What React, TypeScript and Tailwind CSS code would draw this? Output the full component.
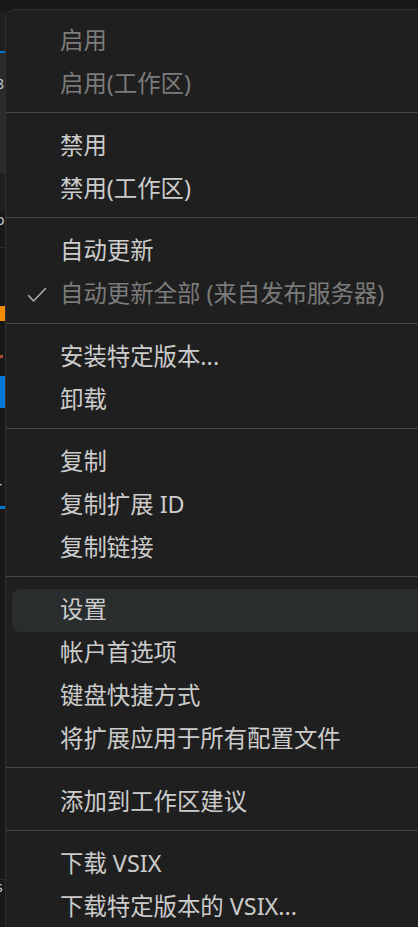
import React from 'react';

type Item = { label: string; disabled?: boolean; checked?: boolean; active?: boolean };

const GROUPS: Item[][] = [
  [{ label: '启用', disabled: true }, { label: '启用(工作区)', disabled: true }],
  [{ label: '禁用' }, { label: '禁用(工作区)' }],
  [{ label: '自动更新' }, { label: '自动更新全部 (来自发布服务器)', disabled: true, checked: true }],
  [{ label: '安装特定版本...' }, { label: '卸载' }],
  [{ label: '复制' }, { label: '复制扩展 ID' }, { label: '复制链接' }],
  [
    { label: '设置', active: true },
    { label: '帐户首选项' },
    { label: '键盘快捷方式' },
    { label: '将扩展应用于所有配置文件' },
  ],
  [{ label: '添加到工作区建议' }],
  [{ label: '下载 VSIX' }, { label: '下载特定版本的 VSIX...' }],
];

const FONT = { fontFamily: '"Noto Sans", "Noto Sans CJK SC", sans-serif' };

const Check = () => (
  <svg width="20" height="16" viewBox="0 0 20 16" fill="none" className="absolute left-[15px] top-[13px]">
    <path d="M1.5 8.5 L6.5 14 L18.5 1.5" stroke="#b0b0b0" strokeWidth="1.5" strokeLinecap="round" strokeLinejoin="round" />
  </svg>
);

const MenuRow = ({ item }: { item: Item }) => (
  <div
    className={`relative h-[43px] flex items-center pl-[48px] rounded-[8px] text-[23.4px] whitespace-nowrap ${
      item.active ? 'bg-[#2a2d2e]' : ''
    } ${item.disabled ? 'text-[#7b7b7b]' : 'text-[#cccccc]'}`}
  >
    {item.checked && <Check />}
    <span className="leading-none -mt-[2px]">{item.label}</span>
  </div>
);

// strip of the editor that peeks out left of the menu
const BackStrip = () => (
  <div className="w-[5px] h-full flex flex-col bg-[#181818] text-[#cccccc] text-[14px] overflow-hidden leading-none">
    <div className="h-[12px] bg-[#181818]" />
    <div className="h-[39px] bg-[#202020]" />
    <div className="h-[2px] bg-[#0078d4]" />
    <div className="h-[24px] bg-[#2b2b2b]" />
    <div className="h-[14px] bg-[#2b2b2b] -ml-[4px]">8</div>
    <div className="h-[28px] bg-[#2b2b2b]" />
    <div className="h-[14px] bg-[#2b2b2b] -ml-[4px]">)</div>
    <div className="h-[40px] bg-[#2b2b2b]" />
    <div className="h-[40px] bg-[#1f1f1f]" />
    <div className="h-[14px] -ml-[4px]">o</div>
    <div className="h-[20px]" />
    <div className="h-px bg-[#2b2b2b]" />
    <div className="h-[58px]" />
    <div className="h-[15px] bg-[#f28c00]" />
    <div className="h-[34px]" />
    <div className="h-[3px] w-[3px] bg-[#b04a2a]" />
    <div className="h-[18px]" />
    <div className="h-[32px] bg-[#0078d4]" />
    <div className="h-[72px]" />
    <div className="h-[14px] -ml-[4px] text-[#cccccc]">r</div>
    <div className="h-[12px]" />
    <div className="h-[3px] bg-[#0078d4]" />
    <div className="h-[370px]" />
    <div className="h-px bg-[#2b2b2b]" />
    <div className="h-[14px] -ml-[4px]">s</div>
  </div>
);

export default function App() {
  return (
    <div className="relative w-[418px] h-[927px] overflow-hidden bg-[#181818]" style={FONT}>
      <BackStrip />
      <div className="absolute left-[5px] top-[9px] w-[460px] h-[960px] bg-[#1f1f1f] border border-[#303030] rounded-tl-[10px] pt-[10px] pl-[6px]">
        {GROUPS.map((g, gi) => (
          <div key={gi}>
            {gi > 0 && (
              <div className="h-[19.3px] pt-[6px]">
                <div className="h-px bg-[#454545] -ml-[6px]" />
              </div>
            )}
            {g.map((it) => (
              <MenuRow key={it.label} item={it} />
            ))}
          </div>
        ))}
      </div>
    </div>
  );
}
